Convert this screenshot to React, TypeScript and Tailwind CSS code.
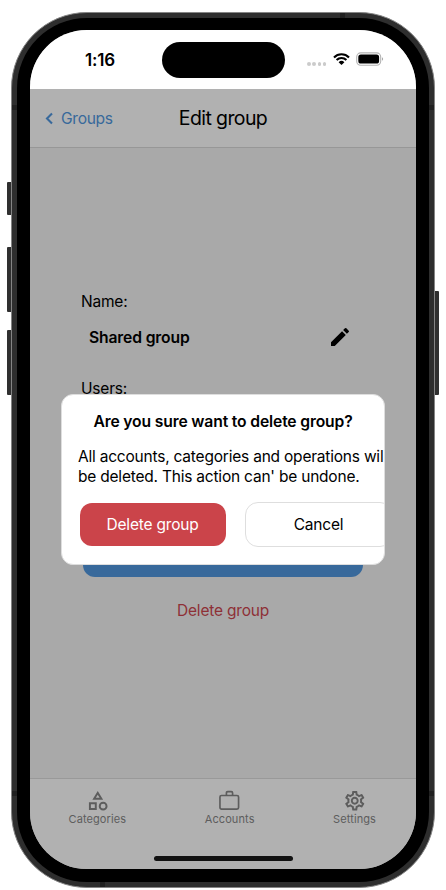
import type { ReactNode } from "react";
import { MdEdit, MdOutlineCategory, MdOutlineSettings } from "react-icons/md";

function StatusBar() {
  return (
    <div className="flex h-[59px] shrink-0 items-start bg-white pt-[12px]">
      <div className="w-[131.5px] pl-[55px] pt-[6px] text-[17px] leading-6 font-semibold tracking-[-0.2px]">1:16</div>
      <div className="h-[36px] w-[123px] rounded-full bg-black" />
      <div className="ml-[22.5px] mt-[20px] flex gap-[1.8px]">
        {[0, 1, 2, 3].map((n) => (
          <span key={n} className="size-[3.5px] rounded-full bg-[#cbcbcb]" />
        ))}
      </div>
      <svg className="ml-[6.6px] mt-[11px] h-[12px] w-[17px]" viewBox="0 0 17 12">
        <path d="M1 4.4a10.6 10.6 0 0 1 15 0M3.6 7.1a6.9 6.9 0 0 1 9.8 0" fill="none" stroke="#000" strokeWidth="2.1" />
        <path d="M5.6 9.2a4.1 4.1 0 0 1 5.8 0L8.5 12z" />
      </svg>
      <svg className="ml-[6.5px] mt-[10px] h-[14px] w-[28px]" viewBox="0 0 28 14">
        <rect x="0.7" y="0.9" width="24" height="12.3" rx="4" fill="none" stroke="#b3b3b3" strokeWidth="1.1" />
        <rect x="2.3" y="2.5" width="20.8" height="9.1" rx="2.6" />
        <path d="M26 5.2c1.5.6 1.5 3 0 3.6z" fill="#aaa" />
      </svg>
    </div>
  );
}

function Header() {
  return (
    <header className="grid h-[59px] shrink-0 grid-cols-[1fr_auto_1fr] items-center border-b border-[#979797] bg-[#b1b1b1] pt-px">
      <div className="flex items-center pl-[15px] text-[#38699b]">
        <svg className="h-[13px] w-[9px]" viewBox="0 0 9 13">
          <path d="M7 1.4 2 6.5l5 5.1" fill="none" stroke="currentColor" strokeWidth="2.1" />
        </svg>
        <span className="ml-[7px] text-[15.6px] tracking-[-0.3px]">Groups</span>
      </div>
      <h1 className="pt-px text-[19.5px] tracking-[-0.6px]">Edit group</h1>
    </header>
  );
}

function Briefcase() {
  return (
    <svg className="size-[23.5px]" viewBox="0 0 24 24" fill="none" stroke="currentColor" strokeWidth="1.7">
      <rect x="2" y="6.6" width="19" height="14" rx="1.6" />
      <path d="M8.6 6.6V4c0-.9.4-1.3 1.3-1.3h3.7c.9 0 1.3.4 1.3 1.3v2.6" />
    </svg>
  );
}

function Tab({ icon, label }: { icon: ReactNode; label: string }) {
  return (
    <div className="flex flex-col items-center text-[23.5px]">
      {icon}
      <span className="-mt-px text-[11px] leading-[14px] tracking-[0.1px]">{label}</span>
    </div>
  );
}

function TabBar() {
  return (
    <nav className="flex h-[91px] shrink-0 flex-col border-t border-[#999] bg-[#b1b1b1] text-[#5d5d5d]">
      <div className="flex justify-between pt-[10px] pr-[40px] pl-[38.5px]">
        <Tab icon={<MdOutlineCategory />} label="Categories" />
        <Tab icon={<Briefcase />} label="Accounts" />
        <Tab icon={<MdOutlineSettings />} label="Settings" />
      </div>
      <div className="mt-auto mb-[8px] h-[5px] w-[139px] self-center rounded-full bg-[#121212]" />
    </nav>
  );
}

function DeleteDialog() {
  return (
    <div className="absolute top-[363.5px] left-[31px] flex h-[171px] w-[324px] flex-col overflow-hidden rounded-[12px] border border-[#dedede] bg-white">
      <h2 className="mt-[16px] text-center text-[15.7px] leading-[22px] font-semibold tracking-[-0.15px]">
        Are you sure want to delete group?
      </h2>
      <p className="mt-[14px] ml-[16px] text-[15.5px] leading-[20px] tracking-[-0.21px] whitespace-nowrap">
        All accounts, categories and operations will
        <br />
        be deleted. This action can' be undone.
      </p>
      <div className="mt-[15px] ml-[17.5px] flex items-center gap-[19px] text-[15.5px] tracking-[-0.2px]">
        <button className="h-[43px] w-[146px] shrink-0 rounded-[12px] bg-[#cb444a] pt-px text-white">Delete group</button>
        <button className="h-[45px] w-[148px] shrink-0 rounded-[13px] border border-[#dedede] bg-white pt-px">Cancel</button>
      </div>
    </div>
  );
}

export default function App() {
  return (
    <div className="relative h-[890px] w-[446px] overflow-hidden bg-white pt-[12px] pl-[11px] font-['Inter','Liberation_Sans',sans-serif] text-black">
      <div className="absolute top-[182px] left-[7px] h-[33px] w-[5px] rounded-l-[1px] bg-[#303030]" />
      <div className="absolute top-[247px] left-[7px] h-[65px] w-[5px] rounded-l-[1px] bg-[#303030]" />
      <div className="absolute top-[330px] left-[7px] h-[65px] w-[5px] rounded-l-[1px] bg-[#303030]" />
      <div className="absolute top-[291px] left-[434px] h-[104px] w-[5px] rounded-r-[1px] bg-[#303030]" />
      <div className="relative h-[876px] w-[424px] rounded-[76px] border border-[#858585] bg-[#2e2e2e] p-[5px]">
        <div className="absolute top-0 left-[328px] h-[5px] w-[5px] bg-[#202020]" />
        <div className="absolute bottom-0 left-[88px] h-[5px] w-[5px] bg-[#202020]" />
        <div className="absolute top-[92px] left-0 h-[5px] w-[5px] bg-[#202020]" />
        <div className="absolute top-[92px] right-0 h-[5px] w-[5px] bg-[#202020]" />
        <div className="absolute bottom-[91px] left-0 h-[5px] w-[5px] bg-[#202020]" />
        <div className="absolute right-0 bottom-[91px] h-[5px] w-[5px] bg-[#202020]" />
        <div className="relative h-full rounded-[70px] bg-black px-[13px] pt-[12px] pb-[13px]">
          <div className="relative flex h-[839px] w-[386px] flex-col overflow-hidden rounded-[57px] bg-[#a9a9a9]">
            <StatusBar />
            <Header />
            <main className="flex min-h-0 flex-1 flex-col px-[51px] pt-[143px] text-[15.5px] leading-[22px] tracking-[-0.2px]">
              <p>Name:</p>
              <div className="mt-[12px] flex items-center justify-between pr-[13px] pl-[8px]">
                <strong className="pt-px text-[15.7px] font-semibold tracking-[-0.15px]">Shared group</strong>
                <MdEdit className="size-[24px]" />
              </div>
              <p className="mt-[29px]">Users:</p>
              <div className="mt-[134px] mx-[2px] h-[43px] rounded-[12px] bg-[#38699b]" />
              <p className="mt-[23px] text-center text-[#8e3036]">Delete group</p>
            </main>
            <TabBar />
            <DeleteDialog />
          </div>
        </div>
      </div>
    </div>
  );
}
